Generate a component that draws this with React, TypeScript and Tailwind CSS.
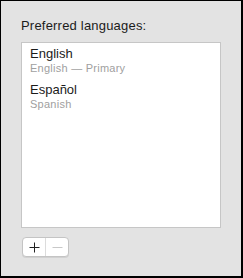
import React from 'react'

const languages = [
  { name: 'English', detail: 'English — Primary' },
  { name: 'Español', detail: 'Spanish' },
]

export default function App() {
  return (
    <div className="w-[243px] h-[278px] bg-[#e3e3e3] border-l border-t border-r-2 border-b-2 border-black font-['Liberation_Sans',Arial,sans-serif] text-[#1b1b1b]">
      <div className="pl-[20px] pt-[17px]">
        <p className="text-[13px] leading-[16px] tracking-[0.2px]">Preferred languages:</p>

        <div className="mt-[8px] w-[200px] h-[186px] border border-[#c6c6c6] bg-white pl-[8px] pt-[3px] flex flex-col gap-[8px]">
          {languages.map((lang) => (
            <div key={lang.name}>
              <div className="text-[13px] leading-[16px]">{lang.name}</div>
              <div className="text-[11px] leading-[12px] tracking-[0.25px] text-[#a0a0a0]">{lang.detail}</div>
            </div>
          ))}
        </div>

        <div className="mt-[9px] ml-[1px] flex w-[47px] h-[20px] rounded-[4px] border border-[#c4c4c4] bg-white shadow-[0_1px_0_rgba(0,0,0,0.08)] overflow-hidden">
          <button className="w-[23px] h-full flex items-center justify-center border-r border-[#dcdcdc]">
            <svg width="11" height="11" viewBox="0 0 11 11">
              <path d="M5.5 0.5v10M0.5 5.5h10" stroke="#222" strokeWidth="1" />
            </svg>
          </button>
          <button className="flex-1 h-full flex items-center justify-center">
            <svg width="11" height="11" viewBox="0 0 11 11">
              <path d="M0.5 5.5h10" stroke="#c8c8c8" strokeWidth="1" />
            </svg>
          </button>
        </div>
      </div>
    </div>
  )
}
